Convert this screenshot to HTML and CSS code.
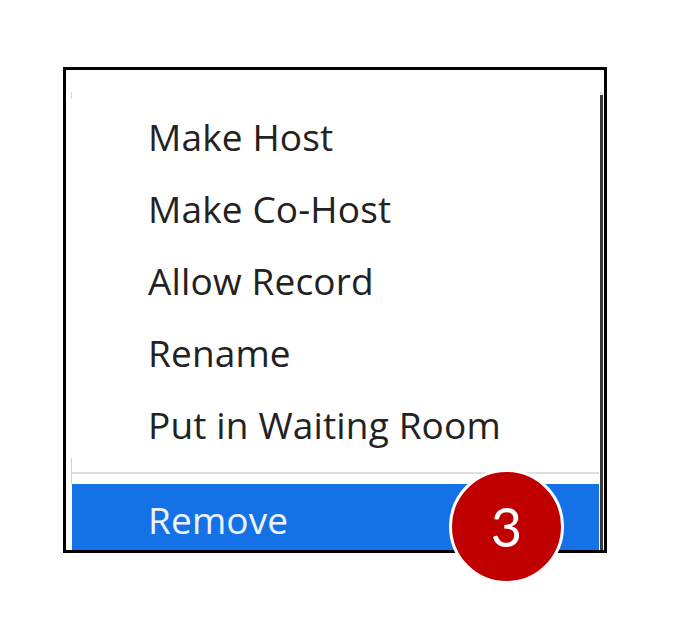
FILE: index.html
```html
<!DOCTYPE html>
<html lang="en">
<head>
<meta charset="utf-8">
<title>Participant menu</title>
<link rel="stylesheet" href="styles.css">
</head>
<body>
<div class="wrap">
  <div class="frame">
    <div class="gutter"></div>
    <div class="menu">
      <ul class="items">
        <li class="item">Make Host</li>
        <li class="item">Make Co-Host</li>
        <li class="item">Allow Record</li>
        <li class="item">Rename</li>
        <li class="item">Put in Waiting Room</li>
      </ul>
      <div class="sep"></div>
      <div class="item active">Remove</div>
    </div>
    <div class="scroll"><div class="thumb"></div></div>
  </div>
  <div class="badge">3</div>
</div>
</body>
</html>
```
FILE: styles.css
```css
html, body {
  margin: 0;
  padding: 0;
  background: #ffffff;
}
body {
  min-height: 626px;
  padding-top: 67px;
  box-sizing: border-box;
  font-family: "Open Sans", "Noto Sans", sans-serif;
}
.wrap {
  position: relative;
  margin: 0 0 0 63px;
  width: 544px;
  height: 486px;
  padding-bottom: 40px;
}
.frame {
  box-sizing: border-box;
  width: 544px;
  height: 486px;
  border: 3px solid #000;
  background: #fff;
  display: grid;
  grid-template-columns: 6px 1fr 5px;
}
.gutter {
  background-image:
    linear-gradient(#d4d4d4, #d4d4d4),
    linear-gradient(#d0d0d0, #d0d0d0);
  background-repeat: no-repeat;
  background-size: 1px 7px, 1px 26px;
  background-position: 5px 22px, 5px 388px;
}
.menu {
  overflow: hidden;
  padding-top: 31px;
}
.items {
  list-style: none;
  margin: 0;
  padding: 0;
}
.item {
  height: 72px;
  line-height: 72px;
  padding-left: 76px;
  font-size: 37px;
  letter-spacing: 0.15px;
  color: #222;
  white-space: nowrap;
}
.sep {
  margin: 11px 0 10px;
  height: 2px;
  background: #dedede;
}
.item.active {
  background: #1472e6;
  color: #eef4ff;
}
.scroll {
  padding-top: 22px;
  display: flex;
}
.thumb {
  width: 3px;
  margin-left: 1px;
  background: #3a3a3a;
  border-top: 3px solid #e6e6e6;
}
.badge {
  position: absolute;
  z-index: 2;
  left: 386px;
  top: 402px;
  box-sizing: border-box;
  width: 115px;
  height: 115px;
  border: 3px solid #fff;
  border-radius: 50%;
  background: #c00000;
  color: #fff;
  font-family: "Lato", "Open Sans", sans-serif;
  font-size: 54px;
  display: flex;
  align-items: center;
  justify-content: center;
  line-height: 1;
}
```
